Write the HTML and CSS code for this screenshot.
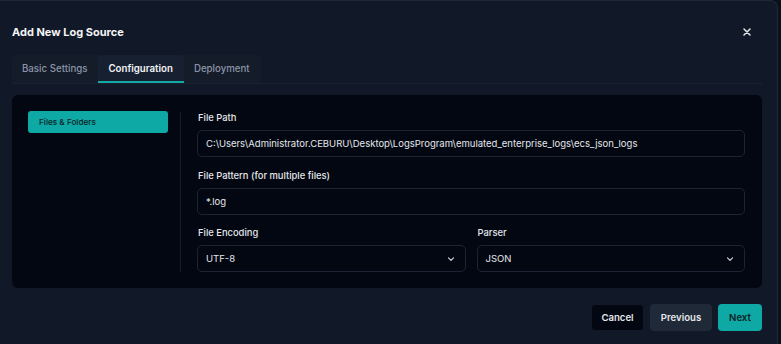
FILE: index.html
```html
<!DOCTYPE html>
<html lang="en">
<head>
<meta charset="utf-8">
<title>Add New Log Source</title>
<link rel="stylesheet" href="styles.css">
</head>
<body>
<div class="dialog">
  <div class="header">
    <h2 class="title">Add New Log Source</h2>
    <button class="close" aria-label="Close">
      <svg width="8" height="8" viewBox="0 0 8 8"><path d="M1 1L7 7M7 1L1 7" stroke="#e5e7eb" stroke-width="1.5" stroke-linecap="round"/></svg>
    </button>
  </div>
  <div class="tabs-row">
    <div class="tabs">
      <div class="tab">Basic Settings</div>
      <div class="tab active">Configuration</div>
      <div class="tab">Deployment</div>
    </div>
  </div>
  <div class="panel">
    <div class="sidebar">
      <div class="side-item">Files &amp; Folders</div>
    </div>
    <div class="main">
      <div class="field">
        <label class="label">File Path</label>
        <div class="input">C:\Users\Administrator.CEBURU\Desktop\LogsProgram\emulated_enterprise_logs\ecs_json_logs</div>
      </div>
      <div class="field">
        <label class="label">File Pattern (for multiple files)</label>
        <div class="input">*.log</div>
      </div>
      <div class="row">
        <div class="field">
          <label class="label">File Encoding</label>
          <div class="input select">UTF-8
            <svg class="chev" width="10" height="10" viewBox="0 0 10 10"><path d="M2.5 3.8L5 6.3L7.5 3.8" fill="none" stroke="#cbd5e1" stroke-width="1.2" stroke-linecap="round" stroke-linejoin="round"/></svg>
          </div>
        </div>
        <div class="field">
          <label class="label">Parser</label>
          <div class="input select">JSON
            <svg class="chev" width="10" height="10" viewBox="0 0 10 10"><path d="M2.5 3.8L5 6.3L7.5 3.8" fill="none" stroke="#cbd5e1" stroke-width="1.2" stroke-linecap="round" stroke-linejoin="round"/></svg>
          </div>
        </div>
      </div>
    </div>
  </div>
  <div class="footer">
    <button class="btn cancel">Cancel</button>
    <button class="btn prev">Previous</button>
    <button class="btn next">Next</button>
  </div>
</div>
</body>
</html>
```
FILE: styles.css
```css
* { box-sizing: border-box; }
html, body {
  margin: 0;
  padding: 0;
  background: #0b101a;
  font-family: Inter, "Noto Sans", sans-serif;
  color: #e5e7eb;
}
.dialog {
  width: 788px;
  height: 360px;
  margin-left: -10px;
  padding-left: 10px;
  background: #111827;
  border-top: 1px solid #1f2937;
  border-right: 1px solid #1f2937;
  border-top-right-radius: 8px;
}
.header {
  display: flex;
  align-items: center;
  justify-content: space-between;
  padding: 21px 26px 0 12px;
  height: 40px;
}
.title {
  margin: 0;
  font-size: 11px;
  font-weight: 700;
  color: #f3f4f6;
}
.close {
  background: none;
  border: 0;
  padding: 0;
  display: flex;
  width: 8px;
  height: 8px;
}
.tabs-row {
  margin: 14px 15px 0 12px;
  border-bottom: 1px solid #1a2230;
}
.tabs {
  display: inline-flex;
  background: #141b29;
  border-radius: 4px 4px 0 0;
  height: 28px;
}
.tab {
  display: flex;
  align-items: center;
  padding: 0 11px 0 10px;
  font-size: 9.7px;
  font-weight: 500;
  color: #8b95a7;
  border-bottom: 2px solid transparent;
}
.tab.active {
  background: #172031;
  color: #f3f4f6;
  font-weight: 600;
  border-bottom-color: #12a8a4;
  border-radius: 4px 4px 0 0;
}
.panel {
  margin: 11px 15px 0 12px;
  background: #030712;
  border-radius: 6px;
  display: flex;
  padding: 16px 17px 16px 16px;
  height: 193px;
}
.sidebar {
  width: 152px;
  flex: none;
  padding-right: 12px;
}
.side-item {
  background: #0ea8a5;
  color: #0b1f24;
  border-radius: 3px;
  height: 22px;
  display: flex;
  align-items: center;
  padding-left: 11px;
  font-size: 8.2px;
  font-weight: 500;
}
.main {
  flex: 1;
  border-left: 1px solid #161d2b;
  padding-left: 16px;
  display: flex;
  flex-direction: column;
  gap: 11px;
  margin-top: 1px;
}
.field {
  display: flex;
  flex-direction: column;
  gap: 6px;
  flex: 1;
}
.label {
  font-size: 9.4px;
  font-weight: 500;
  color: #e5e7eb;
  line-height: 12px;
  padding-left: 1px;
}
.input {
  height: 27px;
  border: 1px solid #1c2433;
  border-radius: 5px;
  background: #030712;
  display: flex;
  align-items: center;
  padding: 0 8px;
  font-size: 9.5px;
  color: #e5e7eb;
  white-space: nowrap;
}
.select { justify-content: space-between; padding-right: 9px; }
.row {
  display: flex;
  gap: 11px;
}
.footer {
  display: flex;
  justify-content: flex-end;
  gap: 6px;
  margin: 16px 15px 0 0;
}
.btn {
  height: 27px;
  border-radius: 4px;
  border: 0;
  font-family: Inter, "Noto Sans", sans-serif;
  font-size: 9.6px;
  font-weight: 600;
  padding: 0;
}
.cancel {
  background: #030712;
  color: #e5e7eb;
  border: 1px solid #111827;
  width: 53px;
}
.prev {
  background: #1f2937;
  color: #e5e7eb;
  width: 62px;
}
.next {
  background: #0ea8a5;
  color: #0b1f24;
  width: 44px;
}
```
